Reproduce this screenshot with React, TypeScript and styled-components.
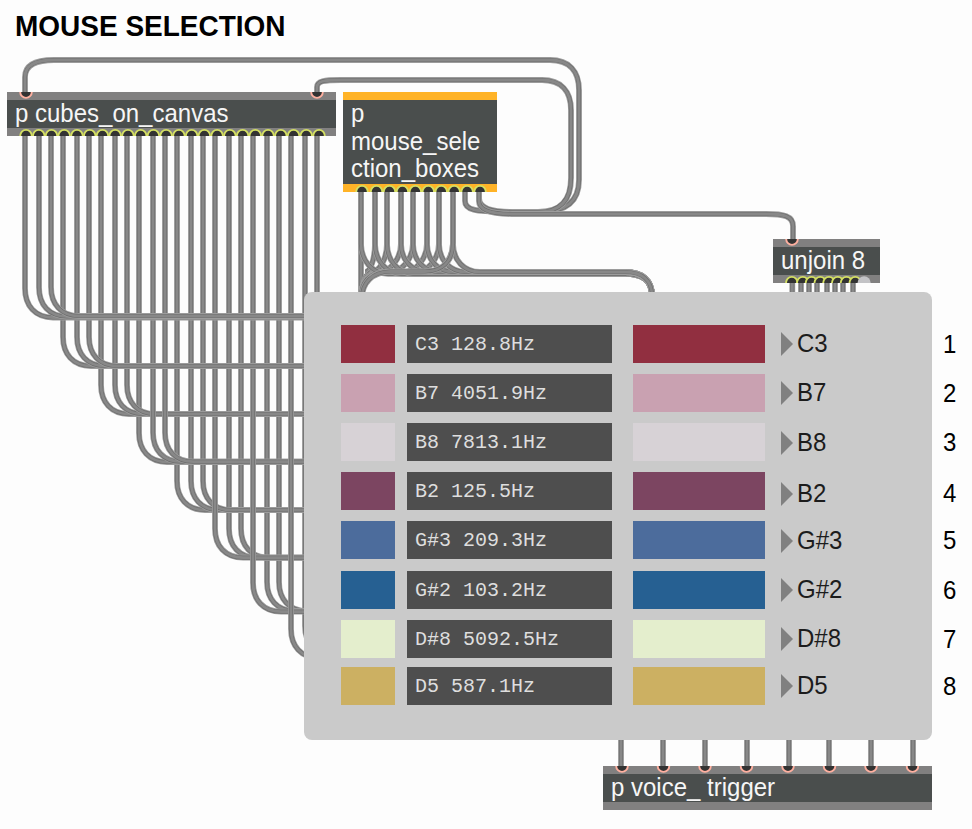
import React from 'react';
import styled, { createGlobalStyle } from 'styled-components';

const GlobalStyle = createGlobalStyle`
  body { margin: 0; background: #fdfdfd; }
  * { box-sizing: border-box; }
`;

const Canvas = styled.main`
  position: relative;
  width: 972px;
  height: 829px;
  overflow: hidden;
  background: #fdfdfd;
  font-family: "Liberation Sans", Arial, sans-serif;
`;

const Title = styled.h1`
  margin: 0;
  padding: 9px 0 0 15px;
  font-size: 29px;
  line-height: 34px;
  font-weight: 700;
  color: #000;
  white-space: nowrap;
  transform: scaleX(0.965);
  transform-origin: 15px 0;
`;

const Layer = styled.svg`
  position: absolute;
  inset: 0;
  pointer-events: none;
`;

const Node = styled.section<{ $x: number; $y: number; $w: number; $h: number; $accent?: string }>`
  position: absolute;
  left: ${p => p.$x}px;
  top: ${p => p.$y}px;
  width: ${p => p.$w}px;
  height: ${p => p.$h}px;
  background: #4a4e4d;
  border: solid ${p => p.$accent ?? '#818080'};
  border-width: 8px 0;
  padding-left: 8px;
`;

const NodeText = styled.div`
  font-size: 25px;
  line-height: 27.7px;
  color: #f6f6f6;
  white-space: pre;
  transform: scaleX(0.96);
  transform-origin: 0 0;
`;

const Panel = styled.section`
  position: absolute;
  left: 304px;
  top: 292px;
  width: 628px;
  height: 448px;
  padding: 33px 0 0 37px;
  border-radius: 8px;
  background: #cacaca;
`;

const VoiceRow = styled.div<{ $gap: number }>`
  display: grid;
  grid-template-columns: 54px 205px 132px 12px 142px 30px;
  width: 632px;
  height: 38px;
  margin-bottom: ${p => p.$gap}px;
`;

const Swatch = styled.div<{ $color: string }>`
  background: ${p => p.$color};
`;

const Readout = styled.div`
  margin-left: 12px;
  width: 205px;
  height: 38px;
  padding: 1px 0 0 8px;
  background: #4e4e4e;
  color: #dedede;
  font: 20px/38px "Liberation Mono", monospace;
  white-space: pre;
`;

const WideSwatch = styled(Swatch)`
  margin-left: 33px;
  width: 132px;
`;

const Arrow = styled.svg<{ $shift: number }>`
  display: block;
  margin: ${p => 7 + p.$shift}px 0 0 49px;
`;

const Label = styled.div<{ $shift: number; $left: number; $color: string }>`
  padding-top: ${p => 4 + p.$shift}px;
  margin-left: ${p => p.$left}px;
  font-size: 25px;
  line-height: 28px;
  color: ${p => p.$color};
  transform: scaleX(0.96);
  transform-origin: 0 0;
`;

interface Voice { note: string; freq: string; color: string; gap: number; noteShift: number; numShift: number }

const voices: Voice[] = [
  { note: 'C3', freq: '128.8', color: '#912f40', gap: 11, noteShift: 0, numShift: 1 },
  { note: 'B7', freq: '4051.9', color: '#c9a1b1', gap: 11, noteShift: 0, numShift: 1 },
  { note: 'B8', freq: '7813.1', color: '#d7d2d6', gap: 11, noteShift: 1, numShift: 1 },
  { note: 'B2', freq: '125.5', color: '#7c4561', gap: 11, noteShift: 3, numShift: 3 },
  { note: 'G#3', freq: '209.3', color: '#4c6c9c', gap: 12, noteShift: 1, numShift: 1 },
  { note: 'G#2', freq: '103.2', color: '#266092', gap: 11, noteShift: 0, numShift: 1 },
  { note: 'D#8', freq: '5092.5', color: '#e4eecd', gap: 9, noteShift: 0, numShift: 1 },
  { note: 'D5', freq: '587.1', color: '#ccb062', gap: 0, noteShift: 0, numShift: 1 },
];

function Wire({ d }: { d: string }) {
  return (
    <g fill="none">
      <path d={d} stroke="#9c9c9c" strokeWidth={5.8} />
      <path d={d} stroke="#6c6c6c" strokeWidth={4.2} />
      <path d={d} stroke="#888888" strokeWidth={2.8} />
    </g>
  );
}

const drop = (x: number, y: number, r = 29) =>
  `M${x} 134V${y - r}C${x} ${y - 12} ${x + 10} ${y} ${x + 28} ${y}H310`;

// Back-to-front order decides which cord passes over a crossing.
const cubeCords: string[] = [
  drop(317, 660), drop(305, 655), drop(279, 611), drop(267, 611), drop(241, 557.7), drop(229, 557.7),
  drop(177, 510), drop(191, 510), drop(203, 510), drop(215, 557.7),
  drop(139, 462), drop(101, 414), drop(115, 414), drop(127, 414),
  drop(153, 461.7), drop(165, 461.7), drop(253, 611.7), drop(291, 658),
  drop(63, 366), drop(77, 366), drop(89, 366),
  drop(25, 317.5), drop(39, 316.5), drop(51, 316),
];

const selectionX = [361, 375, 387, 401, 413, 427, 439, 453];

const leftCord = (x: number, i: number) => {
  if (i === 0) return 'M361 190V296';
  const bend = Math.min(24, (x - 361) / 2 + 3);
  const y = 272;
  return `M${x} 190V243C${x} 260 ${x - bend * 0.5} ${y} ${x - bend} ${y}H${Math.min(384, x - bend)}C370 ${y} 361 282 361 298`;
};

const rightCord = (x: number, i: number) => {
  const y = i < 3 ? 273.8 : 272;
  return `M${x} 190V244C${x} 260 ${x + 11} ${y} ${x + 27} ${y}H625C642 ${y} 652 280 652 296`;
};

const Inlet = ({ x, y }: { x: number; y: number }) => (
  <path d={`M${x - 5.8} ${y}A5.8 5.9 0 0 0 ${x + 5.8} ${y}`} fill="#333" stroke="#ffb0a0" strokeWidth={1.9} />
);

const Outlet = ({ x, y }: { x: number; y: number }) => (
  <path d={`M${x - 5.8} ${y}A5.8 6.1 0 0 1 ${x + 5.8} ${y}`} fill="#333" stroke="#d4df62" strokeWidth={1.9} />
);

const cubeOutlets = Array.from({ length: 24 }, (_, i) => 26 + i * 12.74);
const boxOutlets = Array.from({ length: 10 }, (_, i) => (i === 0 ? 362 : 363.6 + i * 12.94));
const unjoinOutlets = Array.from({ length: 8 }, (_, i) => (i === 0 ? 791.8 : 794 + i * 8.75));
const triggerInlets = Array.from({ length: 8 }, (_, i) => 622 + i * 41.5);
const unjoinCords = [792.3, 801, 809, 817, 827, 835, 843, 853];
const triggerCords = [621, 663, 705, 747, 789, 829, 871, 913];

function Cords() {
  return (
    <Layer width="972" height="829" viewBox="0 0 972 829">
      {cubeCords.map(d => <Wire key={d} d={d} />)}
      {selectionX.map((x, i) => <Wire key={`l${x}`} d={leftCord(x, i)} />)}
      {selectionX.map((x, i) => <Wire key={`r${x}`} d={rightCord(x, i)} />)}
      <Wire d="M453 190V243C453 261 443 271 425 271.5H390C372 272 362 283 362 298" />
      <Wire d="M465 190V201C465 210 475 211.5 505 212H540C565 212 579 202 579 180V90C579 71 569 60 550 60H54C36 60 25 65 25 77V94" />
      <Wire d="M479 190V198C479 207 489 212 512 212H538C561 212 571 200 571 178V110C571 91 561 80 542 80H341C324 80 317 81 317 87V94" />
      <Wire d="M479 190V201C479 210 490 214 512 214H766C784 214 793 216 793 226V241" />
      {unjoinCords.map(x => <Wire key={x} d={`M${x} 280V295`} />)}
      {triggerCords.map(x => <Wire key={x} d={`M${x} 738V769`} />)}
    </Layer>
  );
}

function Ports() {
  return (
    <Layer width="972" height="829" viewBox="0 0 972 829">
      {[26, 317].map(x => <Inlet key={x} x={x} y={92} />)}
      <Inlet x={792} y={239} />
      {triggerInlets.map(x => <Inlet key={x} x={x} y={766} />)}
      {cubeOutlets.map(x => <Outlet key={x} x={x} y={136} />)}
      {boxOutlets.map(x => <Outlet key={x} x={x} y={192} />)}
      {unjoinOutlets.map(x => <Outlet key={x} x={x} y={283} />)}
      <path d="M857.5 283A6.6 6.8 0 0 1 870.7 283" fill="#c3c3c6" />
    </Layer>
  );
}

export default function App() {
  return (
    <>
      <GlobalStyle />
      <Canvas>
        <Title>MOUSE SELECTION</Title>
        <Cords />
        <Node $x={7} $y={92} $w={329} $h={44}><NodeText>p cubes_on_canvas</NodeText></Node>
        <Node $x={343} $y={92} $w={154} $h={100} $accent="#ffb327">
          <NodeText>{'p\nmouse_sele\nction_boxes'}</NodeText>
        </Node>
        <Node $x={773} $y={239} $w={107} $h={44}><NodeText>unjoin 8</NodeText></Node>
        <Node $x={603} $y={766} $w={329} $h={44}><NodeText>p voice_ trigger</NodeText></Node>
        <Ports />
        <Panel>
          {voices.map((v, i) => (
            <VoiceRow key={v.note} $gap={v.gap}>
              <Swatch $color={v.color} />
              <Readout>{`${v.note} ${v.freq}Hz`}</Readout>
              <WideSwatch $color={v.color} />
              <Arrow $shift={v.noteShift} width="12" height="24" viewBox="0 0 12 24">
                <path d="M0 0L12 12L0 24Z" fill="#808080" />
              </Arrow>
              <Label $shift={v.noteShift} $left={53} $color="#1c1c1c">{v.note}</Label>
              <Label $shift={v.numShift} $left={57} $color="#000">{i + 1}</Label>
            </VoiceRow>
          ))}
        </Panel>
      </Canvas>
    </>
  );
}
